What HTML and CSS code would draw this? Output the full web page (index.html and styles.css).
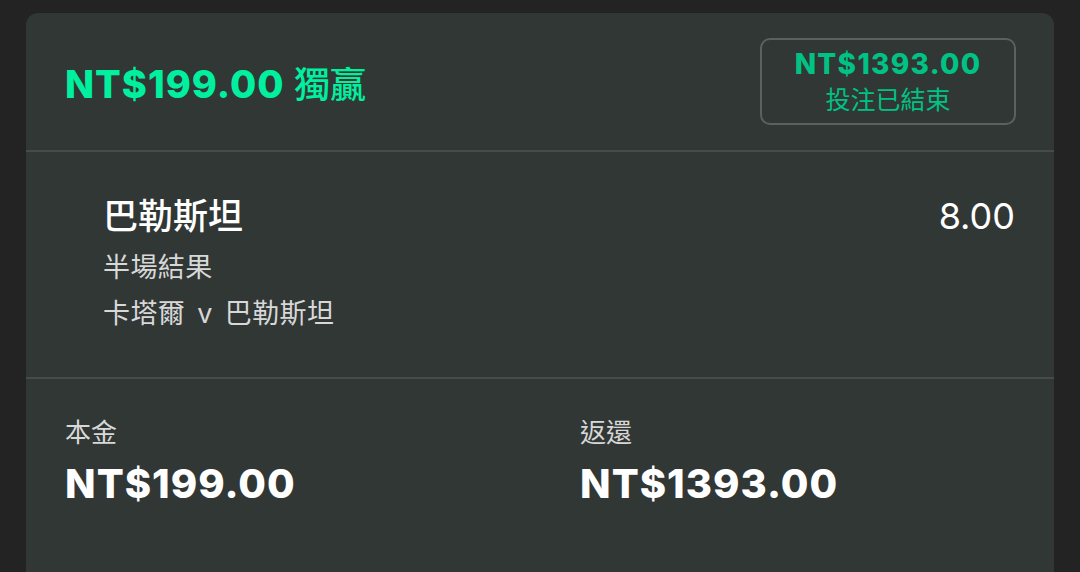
FILE: index.html
```html
<!DOCTYPE html>
<html lang="zh-Hant">
<head>
  <meta charset="UTF-8" />
  <meta name="viewport" content="width=device-width, initial-scale=1.0" />
  <title>投注單</title>
  <link rel="stylesheet" href="styles.css">
</head>
<body>

  <div class="bet-card">
    <header class="bet-head">
      <div class="bet-title">NT$199.00 <span class="cjk">獨贏</span></div>
      <div class="status-box">
        <div class="status-amount">NT$1393.00</div>
        <div class="status-text">投注已結束</div>
      </div>
    </header>

    <section class="selection">
      <div class="selection-info">
        <div class="selection-name">巴勒斯坦</div>
        <div class="selection-market">半場結果</div>
        <div class="selection-event">卡塔爾 v 巴勒斯坦</div>
      </div>
      <div class="selection-odds">8.00</div>
    </section>

    <section class="totals">
      <div class="total">
        <div class="total-label">本金</div>
        <div class="total-value">NT$199.00</div>
      </div>
      <div class="total">
        <div class="total-label">返還</div>
        <div class="total-value">NT$1393.00</div>
      </div>
    </section>
  </div>

</body>
</html>
```

FILE: styles.css
```css
body {
  font-family: Inter, "Noto Sans CJK TC", sans-serif;
  background: #232323;
  margin: 0;
  padding: 13px 26px 0 26px;
  color: #fff;
}

.bet-card {
  background: #313735;
  border-radius: 12px 12px 0 0;
  height: 600px;
}

.bet-head {
  height: 137px;
  padding: 0 38px 0 39px;
  display: flex;
  justify-content: space-between;
  align-items: center;
  border-bottom: 2px solid #474c4a;
}

.bet-title {
  font-size: 38px;
  font-weight: 800;
  color: #00f0a0;
  letter-spacing: 1px;
}

.bet-title .cjk {
  font-size: 36px;
  font-weight: 500;
  letter-spacing: 0;
}

.status-box {
  width: 252px;
  height: 83px;
  border: 2px solid #5c605e;
  border-radius: 10px;
  display: flex;
  flex-direction: column;
  justify-content: center;
  align-items: center;
}

.status-amount {
  font-size: 28px;
  font-weight: 800;
  color: #00c284;
  letter-spacing: 1.3px;
  line-height: 36px;
}

.status-text {
  font-size: 25px;
  color: #00c284;
  line-height: 36px;
}

.selection {
  display: flex;
  justify-content: space-between;
  align-items: flex-start;
  padding: 44px 39px 40px 77px;
  border-bottom: 2px solid #474c4a;
}

.selection-name {
  font-size: 35px;
  font-weight: 500;
  line-height: 40px;
  margin-bottom: 9px;
}

.selection-market,
.selection-event {
  font-size: 27px;
  color: #d8d8d8;
  line-height: 46px;
  letter-spacing: 0.4px;
}

.selection-event {
  word-spacing: 4px;
}

.selection-odds {
  font-size: 36px;
  line-height: 40px;
}

.totals {
  display: grid;
  grid-template-columns: 1fr 1fr;
  column-gap: 80px;
  padding: 39px 39px;
}

.total-label {
  font-size: 26px;
  color: #d8d8d8;
  line-height: 30px;
}

.total-value {
  font-size: 40px;
  font-weight: 800;
  letter-spacing: 1px;
  line-height: 46px;
  margin-top: 13px;
}
```
